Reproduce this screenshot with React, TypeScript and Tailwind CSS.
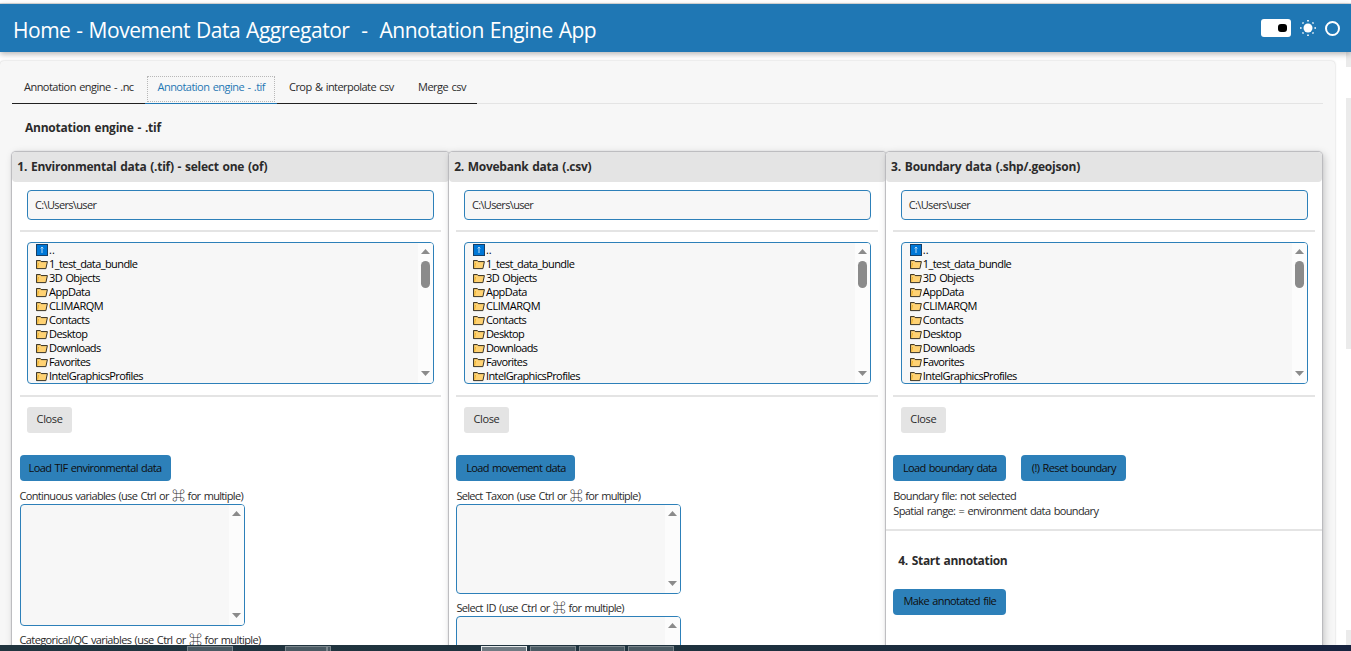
import React from 'react';

const folders = [
  { name: '1_test_data_bundle', spacing: 'tracking-[-0.58px]' },
  { name: '3D Objects', spacing: 'tracking-[-0.6px]' },
  { name: 'AppData', spacing: 'tracking-[-0.5px]' },
  { name: 'CLIMARQM', spacing: 'tracking-[-0.45px]' },
  { name: 'Contacts', spacing: 'tracking-[-0.55px]' },
  { name: 'Desktop', spacing: 'tracking-[-0.6px]' },
  { name: 'Downloads', spacing: 'tracking-[-0.65px]' },
  { name: 'Favorites', spacing: 'tracking-[-0.6px]' },
  { name: 'IntelGraphicsProfiles', spacing: 'tracking-[-0.6px]' },
];

const FolderIcon = () => (
  <svg className="w-[13px] h-[11px] shrink-0" viewBox="0 0 13 11">
    <path d="M0.6 9.6V1.6h3.6l1 1h5.2v1.2" fill="#f0b429" stroke="#3a3428" strokeWidth="1" />
    <path d="M0.6 9.6V1.6h3.6l1 1h6.2L9.9 9.6z" fill="#ffd273" stroke="#3a3428" strokeWidth="1" />
    <path d="M1.6 8.6L2.6 4" fill="none" stroke="#f0b429" strokeWidth="1" />
  </svg>
);

const UpIcon = () => (
  <svg className="w-[12px] h-[12px] shrink-0" viewBox="0 0 12 12">
    <rect x="0.5" y="0.5" width="11" height="11" fill="#0078d7" stroke="#173f66" />
    <path d="M6 3v6M4.7 4.4L6 3l1.3 1.4" fill="none" stroke="#b9dcf7" strokeWidth="1" />
  </svg>
);

const Arrow = ({ down }: { down?: boolean }) => (
  <svg className={`w-[9px] h-[5px] shrink-0 ${down ? 'rotate-180' : ''}`} viewBox="0 0 9 5">
    <path d="M4.5 0L9 5H0z" fill="#8b8b8b" />
  </svg>
);

function ScrollBar({ thumb }: { thumb?: boolean }) {
  return (
    <div className="w-[15px] shrink-0 bg-[#fcfcfc] flex flex-col items-center pt-[6px] pb-[7px]">
      <Arrow />
      {thumb && <div className="w-[9px] h-[27px] mt-[7px] rounded-full bg-[#8b8b8b]" />}
      <div className="flex-1" />
      <Arrow down />
    </div>
  );
}

function Rule() {
  return <div className="h-[2px] bg-[#e4e4e4]" />;
}

function Button({ children, className }: { children: React.ReactNode; className: string }) {
  return (
    <button className={`h-[26px] rounded-[4px] bg-[#2d80b9] text-[#0d0d0d] whitespace-nowrap [word-spacing:1px] flex items-center justify-center ${className}`}>
      {children}
    </button>
  );
}

function SelectLabel({ text, className }: { text: string; className: string }) {
  return (
    <div className={`h-[15px] leading-[15px] whitespace-nowrap ${className}`}>
      {text} (use Ctrl or <span className="font-['Noto_Sans_CJK_JP',sans-serif] text-[13px] leading-[12px] font-medium">⌘</span> for multiple)
    </div>
  );
}

function SelectBox({ className }: { className: string }) {
  return (
    <div className={`w-[225px] border border-[#2d80b9] rounded-[4px] bg-[#f7f7f7] flex justify-end overflow-hidden ${className}`}>
      <ScrollBar />
    </div>
  );
}

function FileSelector() {
  return (
    <div>
      <div className="ml-[7.5px] mr-[6.8px] h-[30px] border border-[#2d80b9] rounded-[4px] bg-[#f7f7f7] px-[7px] flex items-center tracking-[-0.65px]">
        C:\Users\user
      </div>
      <div className="mt-[10px]"><Rule /></div>
      <div className="ml-[7.5px] mr-[6.8px] mt-[10px] h-[142px] border border-[#2d80b9] rounded-[4px] bg-[#f7f7f7] flex overflow-hidden text-black">
        <div className="flex-1 pl-2">
          <div className="h-[14px] flex items-center gap-px">
            <UpIcon />
            <span>..</span>
          </div>
          {folders.map((folder) => (
            <div key={folder.name} className="h-[14px] flex items-center">
              <FolderIcon />
              <span className={`leading-[14px] ${folder.spacing}`}>{folder.name}</span>
            </div>
          ))}
        </div>
        <ScrollBar thumb />
      </div>
      <div className="mt-[11px]"><Rule /></div>
      <button className="ml-[7.5px] mt-[10px] w-[45px] h-[26px] pb-[2px] rounded-[3px] bg-[#e4e4e4] flex items-center justify-center tracking-[-0.35px]">
        Close
      </button>
    </div>
  );
}

function Card({ title, spacing, children }: { title: string; spacing: string; children: React.ReactNode }) {
  return (
    <section className="bg-white rounded-t-[4px] shadow-[0_0_1px_1px_#b8b8bc,2px_2px_8px_rgba(0,0,0,0.22)]">
      <h2 className={`h-[30px] rounded-[4px] bg-[#e4e4e4] pl-[5.5px] text-[12px] font-bold leading-[30px] whitespace-nowrap ${spacing}`}>
        {title}
      </h2>
      <div className="pt-2 px-[7.75px]">
        <FileSelector />
        {children}
      </div>
    </section>
  );
}

function Header() {
  return (
    <header className="relative z-10 h-12 shrink-0 bg-[#1f77b4] text-white flex items-center justify-between pl-[13px] pr-[11px] shadow-[0_2px_6px_rgba(0,0,0,0.3)]">
      <h1 className="text-[21px] leading-[48px] whitespace-pre pt-[3px] tracking-[-0.49px]">
        Home - Movement Data Aggregator  -  Annotation Engine App
      </h1>
      <div className="flex items-center">
        <div className="w-[30px] h-[18px] rounded-[3px] bg-white flex items-center justify-end pr-1">
          <div className="w-[9px] h-2 rounded-[3px] bg-black" />
        </div>
        <svg className="ml-2 w-[18px] h-[18px]" viewBox="0 0 18 18">
          <circle cx="9" cy="9" r="4.5" fill="#fff" />
          <path d="M9 1v1.6M9 15.4V17M1 9h1.6M15.4 9H17M3.5 3.5l1 1M13.5 13.5l1 1M3.5 14.5l1-1M13.5 4.5l1-1" stroke="#fff" strokeWidth="1.6" />
        </svg>
        <div className="ml-2 mt-px w-[15px] h-[15px] rounded-full border-2 border-white" />
      </div>
    </header>
  );
}

function Tabs() {
  return (
    <nav className="mx-3 h-[43px] flex items-stretch whitespace-nowrap leading-[52px]">
      <div className="w-[133px] pl-3 border-b border-[#212121] tracking-[-0.53px]">Annotation engine - .nc</div>
      <div className="w-[132px] px-[2px] pt-[15px] border-b border-[#1f77b4] text-[#1f77b4]">
        <div className="h-[26px] border border-dotted border-[#b8b8b8] pl-[9.5px] leading-[20px] tracking-[-0.53px]">Annotation engine - .tif</div>
      </div>
      <div className="w-[129px] pl-3 border-b border-[#212121] tracking-[-0.55px]">Crop &amp; interpolate csv</div>
      <div className="w-[71px] pl-3 border-b border-[#212121] tracking-[-0.51px]">Merge csv</div>
      <div className="flex-1 border-b border-[#e4e4e4]" />
    </nav>
  );
}

function Taskbar() {
  return (
    <footer className="h-[6px] shrink-0 relative z-10 bg-linear-to-r from-[#21353f] via-[#1e323e] to-[#17233f] flex items-end overflow-hidden">
      <div className="ml-[187px] w-[46px] h-[5px] bg-[#4a5a63] border border-b-0 border-[#7b868c]" />
      <div className="ml-[52px] w-[42px] h-[5px] bg-[#4a5a63] border border-b-0 border-[#7b868c]" />
      <div className="w-[4px] h-[5px] bg-[#4a5a63] border border-b-0 border-[#7b868c]" />
      <div className="ml-[150px] w-[46px] h-[5px] bg-[#6f7b83] border border-b-0 border-[#e8ebec]" />
      <div className="ml-[3px] w-[46px] h-[5px] bg-[#4a5a63] border border-b-0 border-[#7b868c]" />
      <div className="ml-[3px] w-[46px] h-[5px] bg-[#4a5a63] border border-b-0 border-[#7b868c]" />
      <div className="ml-[3px] w-[46px] h-[5px] bg-[#4a5a63] border border-b-0 border-[#7b868c]" />
    </footer>
  );
}

export default function App() {
  return (
    <div className="w-[1351px] h-[651px] flex flex-col overflow-hidden bg-white font-['Open_Sans','Noto_Sans',sans-serif] text-[11px] text-[#2b2b2b] [word-spacing:1px]">
      <div className="h-1 shrink-0 border-b border-[#dcdcdc]" />
      <Header />
      <div className="flex-1 min-h-0 flex justify-between overflow-hidden">
        <main className="w-[1335px] mt-[9px] rounded-t-[4px] bg-[#f7f7f7] shadow-[0_0_2px_rgba(0,0,0,0.25)]">
          <Tabs />
          <h2 className="h-12 leading-12 pl-[25px] text-[12px] font-bold tracking-[-0.24px]">Annotation engine - .tif</h2>
          <div className="ml-[11.8px] w-[1310.7px] h-[520px] grid grid-cols-3">
            <Card title="1. Environmental data (.tif) - select one (of)" spacing="tracking-[-0.26px]">
              <Button className="mt-[22px] w-[151px] tracking-[-0.61px]">Load TIF environmental data</Button>
              <SelectLabel text="Continuous variables" className="mt-[7px] mb-px tracking-[-0.66px]" />
              <SelectBox className="h-[122px]" />
              <SelectLabel text="Categorical/QC variables" className="mt-[6px] tracking-[-0.61px]" />
            </Card>
            <Card title="2. Movebank data (.csv)" spacing="tracking-[-0.27px]">
              <Button className="mt-[22px] w-[119px] tracking-[-0.66px]">Load movement data</Button>
              <SelectLabel text="Select Taxon" className="mt-[7px] mb-px tracking-[-0.7px]" />
              <SelectBox className="h-[90px]" />
              <SelectLabel text="Select ID" className="mt-[6px] mb-px tracking-[-0.65px]" />
              <SelectBox className="h-[90px]" />
            </Card>
            <Card title="3. Boundary data (.shp/.geojson)" spacing="tracking-[-0.22px]">
              <div className="mt-[22px] flex gap-[15px]">
                <Button className="w-[113px] tracking-[-0.66px]">Load boundary data</Button>
                <Button className="w-[105px] tracking-[-0.61px]">(!) Reset boundary</Button>
              </div>
              <div className="mt-[7px] leading-[15px] tracking-[-0.63px]">Boundary file: not selected</div>
              <div className="leading-[15px] tracking-[-0.62px]">Spatial range: = environment data boundary</div>
              <div className="mt-[11px] -mx-[7.75px]"><Rule /></div>
              <h2 className="mt-[20px] pl-[5px] h-[20px] leading-[20px] text-[12px] font-bold tracking-[-0.33px]">4. Start annotation</h2>
              <Button className="mt-[18px] w-[113px] pb-px tracking-[-0.61px]">Make annotated file</Button>
            </Card>
          </div>
        </main>
        <div className="w-[5px]">
          <div className="h-[15px] bg-[#ebebeb]" />
          <div className="mt-[31px] h-[251px] bg-[#ebebeb]" />
          <div className="mt-[281px] h-[15px] bg-[#ebebeb]" />
        </div>
      </div>
      <Taskbar />
    </div>
  );
}
